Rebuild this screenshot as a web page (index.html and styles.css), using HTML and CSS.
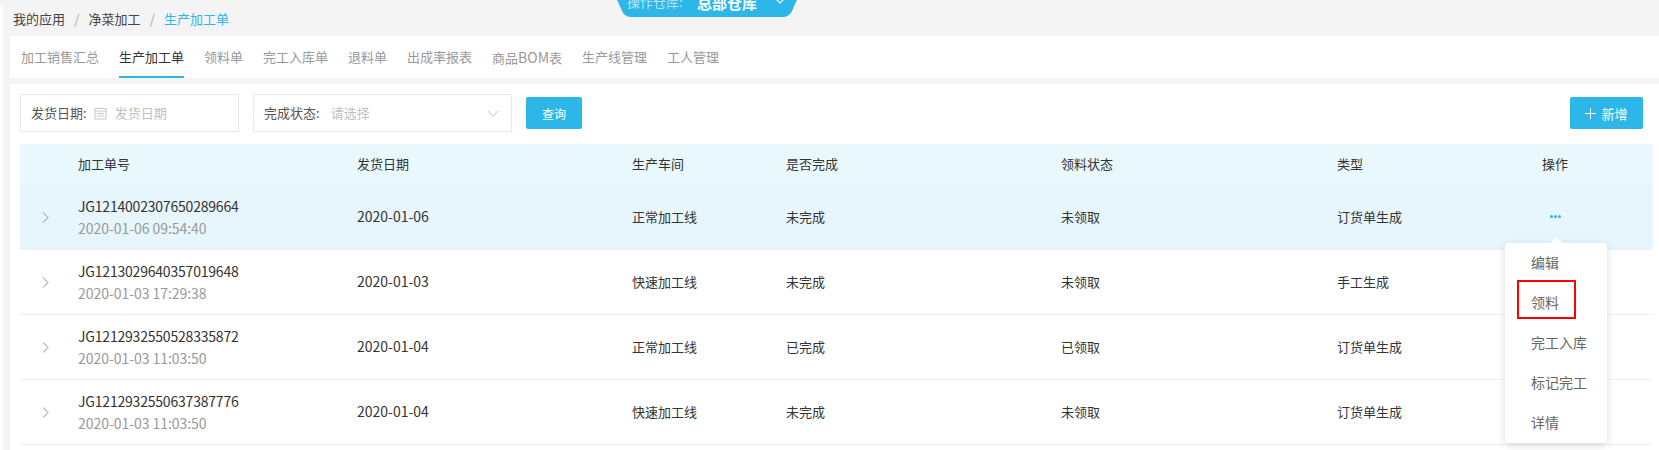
FILE: index.html
```html
<!DOCTYPE html>
<html lang="zh-CN">
<head>
<meta charset="utf-8">
<title>生产加工单</title>
<link rel="stylesheet" href="styles.css">
</head>
<body>
<div class="edge"></div>
<div class="pill">
  <svg class="pill-bg" width="180" height="17" viewBox="0 0 180 17"><path d="M0 0H180C178 3 177 7 175 11C173 15 170 17 165 17H15C10 17 7 15 5 11C3 7 2 3 0 0Z" fill="#2db7e8"/></svg>
  <span class="pill-label">操作仓库:</span><span class="pill-value">总部仓库</span>
  <svg class="pill-chev" width="12" height="8" viewBox="0 0 12 8"><path d="M1 1L6 6L11 1" fill="none" stroke="#fff" stroke-width="1.2"/></svg>
</div>
<main class="page">
  <nav class="crumbs"><span>我的应用</span><i>/</i><span>净菜加工</span><i>/</i><span class="current">生产加工单</span></nav>
  <div class="tabs">
    <span class="tab">加工销售汇总</span><span class="tab active">生产加工单</span><span class="tab">领料单</span><span class="tab">完工入库单</span><span class="tab">退料单</span><span class="tab">出成率报表</span><span class="tab">商品<span class="latin">BOM</span>表</span><span class="tab">生产线管理</span><span class="tab">工人管理</span>
  </div>
  <section class="panel">
    <div class="filters">
      <div class="field field-date"><label>发货日期:</label>
        <svg class="cal" width="13" height="13" viewBox="0 0 13 13"><path d="M1 1.5H12V12H1ZM1 4H12M3 6.5H10M3 9H10" fill="none" stroke="#c4c4c4"/></svg>
        <span class="ph">发货日期</span></div>
      <div class="field field-select"><label>完成状态:</label><span class="ph ph-select">请选择</span>
        <svg class="sel-chev" width="12" height="8" viewBox="0 0 12 8"><path d="M1 1L6 6.5L11 1" fill="none" stroke="#c4c4c4"/></svg></div>
      <button class="btn">查询</button>
      <button class="btn btn-new"><svg class="plus" width="11" height="11" viewBox="0 0 11 11"><path d="M5.5 0V11M0 5.5H11" stroke="#fff" fill="none"/></svg>新增</button>
    </div>
    <table class="grid">
      <colgroup><col class="c0"><col class="c1"><col class="c2"><col class="c3"><col class="c4"><col class="c5"><col class="c6"><col class="c7"></colgroup>
      <thead><tr><th></th><th>加工单号</th><th>发货日期</th><th>生产车间</th><th>是否完成</th><th>领料状态</th><th>类型</th><th>操作</th></tr></thead>
      <tbody>
        <tr class="hl"><td class="exp"><svg width="7" height="11" viewBox="0 0 7 11"><path d="M1 .5L6 5.5L1 10.5" fill="none" stroke="#8c8c8c"/></svg></td><td><div class="no">JG1214002307650289664</div><div class="time">2020-01-06 09:54:40</div></td><td class="latin">2020-01-06</td><td>正常加工线</td><td>未完成</td><td>未领取</td><td>订货单生成</td><td><span class="dots"><b></b><b></b><b></b></span></td></tr>
        <tr><td class="exp"><svg width="7" height="11" viewBox="0 0 7 11"><path d="M1 .5L6 5.5L1 10.5" fill="none" stroke="#8c8c8c"/></svg></td><td><div class="no">JG1213029640357019648</div><div class="time">2020-01-03 17:29:38</div></td><td class="latin">2020-01-03</td><td>快速加工线</td><td>未完成</td><td>未领取</td><td>手工生成</td><td></td></tr>
        <tr><td class="exp"><svg width="7" height="11" viewBox="0 0 7 11"><path d="M1 .5L6 5.5L1 10.5" fill="none" stroke="#8c8c8c"/></svg></td><td><div class="no">JG1212932550528335872</div><div class="time">2020-01-03 11:03:50</div></td><td class="latin">2020-01-04</td><td>正常加工线</td><td>已完成</td><td>已领取</td><td>订货单生成</td><td></td></tr>
        <tr><td class="exp"><svg width="7" height="11" viewBox="0 0 7 11"><path d="M1 .5L6 5.5L1 10.5" fill="none" stroke="#8c8c8c"/></svg></td><td><div class="no">JG1212932550637387776</div><div class="time">2020-01-03 11:03:50</div></td><td class="latin">2020-01-04</td><td>快速加工线</td><td>未完成</td><td>未领取</td><td>订货单生成</td><td></td></tr>
      </tbody>
    </table>
  </section>
</main>
<div class="menu">
  <div class="item">编辑</div>
  <div class="item">领料</div>
  <div class="item">完工入库</div>
  <div class="item">标记完工</div>
  <div class="item">详情</div>
</div>
<div class="mark"></div>
</body>
</html>
```

FILE: styles.css
```css
* { box-sizing: border-box; }
html, body { margin: 0; height: 450px; overflow: hidden; }
body {
  background: #f4f4f4;
  color: #333;
  font: 13px/1.4 "Noto Sans CJK SC", "Noto Sans", sans-serif;
  position: relative;
}
.latin { font-size: 14px; }
.edge { position: absolute; left: 0; top: 6px; bottom: 0; width: 3px; background: #fff; }
.page { padding-left: 10px; }

.pill { position: absolute; left: 617px; top: 0; width: 180px; height: 17px; overflow: hidden; }
.pill-bg { position: absolute; left: 0; top: 0; }
.pill-label { position: absolute; left: 10px; top: -7px; font-size: 13px; color: #b5e5f7; white-space: nowrap; }
.pill-value { position: absolute; left: 80px; top: -8px; font-size: 15px; font-weight: 700; color: #fff; white-space: nowrap; }
.pill-chev { position: absolute; left: 157px; top: -3px; }

.crumbs { height: 36px; display: flex; align-items: center; padding: 3px 0 0 3px; color: #444; }
.crumbs i { font-style: normal; color: #aaa; margin: 0 9.25px; width: 5px; text-align: center; }
.crumbs .current { color: #2db7e8; }

.tabs { height: 42px; background: #fff; display: flex; gap: 20px; padding-left: 11px; }
.tab { height: 42px; line-height: 42px; color: #999; }
.tab.active { color: #333; border-bottom: 2px solid #2db7e8; }

.panel { margin-top: 6px; background: #fff; height: 366px; padding: 10px 5px 0 10px; }
.filters { display: flex; align-items: center; height: 38px; margin-bottom: 12px; }
.field { height: 38px; border: 1px solid #e8e8e8; display: flex; align-items: center; color: #555; }
.field-date { width: 219px; padding-left: 10px; }
.field-select { width: 259px; margin-left: 14px; padding-left: 10px; position: relative; }
.cal { margin: 0 8px 0 7px; }
.ph { color: #bfbfbf; }
.ph-select { margin-left: 11px; }
.sel-chev { position: absolute; right: 12px; top: 15px; }
.btn { height: 32px; border: 0; border-radius: 2px; background: #2db7e8; color: #fff; font: 12px "Noto Sans CJK SC", sans-serif; padding: 0; width: 56px; margin-left: 14px; }
.btn-new { width: 73px; margin-left: auto; margin-right: 11px; font-size: 13px; display: flex; align-items: center; justify-content: center; }
.plus { margin-right: 5px; }

.grid { width: 1633px; border-collapse: collapse; table-layout: fixed; }
.c0 { width: 58px; } .c1 { width: 279px; } .c2 { width: 275px; } .c3 { width: 154px; }
.c4 { width: 275px; } .c5 { width: 276px; } .c6 { width: 205px; } .c7 { width: 111px; }
.grid th { height: 41px; background: #e9f8fd; font-weight: 400; text-align: left; padding: 0; color: #333; }
.grid td { height: 65px; padding: 1px 0 0; border-bottom: 1px solid #eef0f5; color: #333; }
.hl td { height: 64px; background: #e6f6fc; }
.exp { padding-left: 22px !important; }
.exp svg { display: block; }
.no { font-size: 14px; letter-spacing: -.2px; line-height: 18px; }
.time { font-size: 14px; letter-spacing: -.05px; line-height: 18px; margin-top: 4px; color: #999; }
.dots { display: flex; gap: 1px; padding-left: 8px; margin-top: -2px; }
.dots b { width: 3px; height: 3px; border-radius: 50%; background: #2db7e8; }

.menu { position: absolute; left: 1505px; top: 243px; width: 102px; height: 200px; background: #fff; border-radius: 3px; box-shadow: 0 2px 8px rgba(0,0,0,.15); font-size: 14px; color: #666; }
.menu::before { content: ""; position: absolute; left: 47px; top: -4px; width: 9px; height: 9px; background: #fff; transform: rotate(45deg); }
.item { height: 40px; line-height: 38px; padding-left: 26px; position: relative; }
.mark { position: absolute; left: 1517px; top: 280px; width: 59px; height: 39px; border: 2px solid #f00; }
```
